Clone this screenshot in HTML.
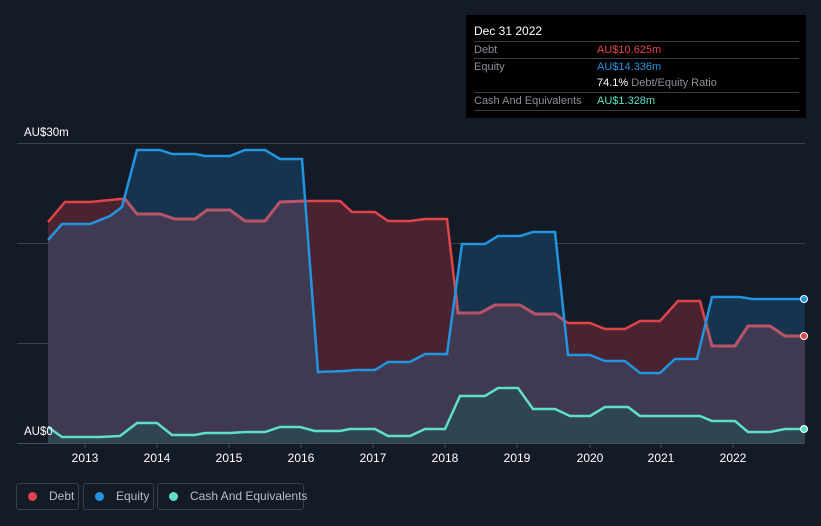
<!DOCTYPE html><html><head><style>
body{margin:0;width:821px;height:526px;background:#151b26;font-family:"Liberation Sans",sans-serif;overflow:hidden;position:relative}
.t{position:absolute;color:#fff;font-size:12px}
.tip{position:absolute;left:466px;top:15px;width:340px;height:103px;background:#000}
.row{position:absolute;left:8px;width:325px;font-size:11px;color:#8a8f98;border-top:1px solid #3a3e45;height:16px;line-height:17px;white-space:nowrap}
.leg{position:absolute;top:483px;height:27px;border:1px solid #3a3f4a;border-radius:3px;color:#b9bdc6;font-size:12px;line-height:25px;box-sizing:border-box;white-space:nowrap}
.dot{display:inline-block;width:9px;height:9px;border-radius:50%;margin:0 12px 0 11px;vertical-align:-1px}
</style></head><body>
<svg width="821" height="526" style="position:absolute;left:0;top:0">
<defs>
<clipPath id="eq"><path d="M48,240 L62,224 L90,224 L110,216 L122,207 L137,150 L160,150 L172,154 L195,154 L205,156 L230,156 L245,150 L265,150 L280,159 L302,159 L318,372 L345,371 L355,370 L375,370 L388,362 L410,362 L425,354 L447,354 L462,244 L485,244 L498,236 L520,236 L533,232 L555,232 L568,355 L590,355 L605,361 L625,361 L640,373 L660,373 L675,359 L697,359 L712,297 L740,297 L752,299 L805,299 L805,443 L48,443Z"/></clipPath>
</defs>
<g stroke="#3a3f4c" stroke-width="1"><line x1="17" y1="143.5" x2="805" y2="143.5"/><line x1="17" y1="243.5" x2="805" y2="243.5"/><line x1="17" y1="343.5" x2="805" y2="343.5"/></g>
<path d="M48,222 L65,202 L90,202 L120,199 L125,199 L137,214 L160,214 L175,219 L195,219 L207,210 L230,210 L245,221 L265,221 L280,202 L305,201 L340,201 L352,212 L375,212 L388,221 L410,221 L425,219 L447,219 L458,313 L480,313 L495,305 L520,305 L535,314 L555,314 L568,323 L590,323 L605,329 L625,329 L640,321 L660,321 L678,301 L700,301 L712,346 L735,346 L748,326 L770,326 L785,336 L805,336 L805,443 L48,443Z" fill="#4a2330"/>
<path d="M48,240 L62,224 L90,224 L110,216 L122,207 L137,150 L160,150 L172,154 L195,154 L205,156 L230,156 L245,150 L265,150 L280,159 L302,159 L318,372 L345,371 L355,370 L375,370 L388,362 L410,362 L425,354 L447,354 L462,244 L485,244 L498,236 L520,236 L533,232 L555,232 L568,355 L590,355 L605,361 L625,361 L640,373 L660,373 L675,359 L697,359 L712,297 L740,297 L752,299 L805,299 L805,443 L48,443Z" fill="#16344d"/>
<path clip-path="url(#eq)" d="M48,222 L65,202 L90,202 L120,199 L125,199 L137,214 L160,214 L175,219 L195,219 L207,210 L230,210 L245,221 L265,221 L280,202 L305,201 L340,201 L352,212 L375,212 L388,221 L410,221 L425,219 L447,219 L458,313 L480,313 L495,305 L520,305 L535,314 L555,314 L568,323 L590,323 L605,329 L625,329 L640,321 L660,321 L678,301 L700,301 L712,346 L735,346 L748,326 L770,326 L785,336 L805,336 L805,443 L48,443Z" fill="#3f3a52"/>
<path d="M48,222 L65,202 L90,202 L120,199 L125,199 L137,214 L160,214 L175,219 L195,219 L207,210 L230,210 L245,221 L265,221 L280,202 L305,201 L340,201 L352,212 L375,212 L388,221 L410,221 L425,219 L447,219 L458,313 L480,313 L495,305 L520,305 L535,314 L555,314 L568,323 L590,323 L605,329 L625,329 L640,321 L660,321 L678,301 L700,301 L712,346 L735,346 L748,326 L770,326 L785,336 L805,336" fill="none" stroke="#e04448" stroke-width="2.5"/>
<path clip-path="url(#eq)" d="M48,222 L65,202 L90,202 L120,199 L125,199 L137,214 L160,214 L175,219 L195,219 L207,210 L230,210 L245,221 L265,221 L280,202 L305,201 L340,201 L352,212 L375,212 L388,221 L410,221 L425,219 L447,219 L458,313 L480,313 L495,305 L520,305 L535,314 L555,314 L568,323 L590,323 L605,329 L625,329 L640,321 L660,321 L678,301 L700,301 L712,346 L735,346 L748,326 L770,326 L785,336 L805,336" fill="none" stroke="#b85468" stroke-width="3"/>
<path d="M48,427 L62,437 L100,437 L120,436 L137,423 L157,423 L172,435 L195,435 L205,433 L230,433 L245,432 L265,432 L280,427 L300,427 L315,431 L340,431 L350,429 L375,429 L388,436 L410,436 L425,429 L445,429 L460,396 L485,396 L498,388 L518,388 L533,409 L555,409 L570,416 L590,416 L605,407 L628,407 L640,416 L700,416 L712,421 L735,421 L748,432 L770,432 L785,429 L805,429 L805,443 L48,443Z" fill="#2c4a50" opacity="0.8"/>
<path d="M48,427 L62,437 L100,437 L120,436 L137,423 L157,423 L172,435 L195,435 L205,433 L230,433 L245,432 L265,432 L280,427 L300,427 L315,431 L340,431 L350,429 L375,429 L388,436 L410,436 L425,429 L445,429 L460,396 L485,396 L498,388 L518,388 L533,409 L555,409 L570,416 L590,416 L605,407 L628,407 L640,416 L700,416 L712,421 L735,421 L748,432 L770,432 L785,429 L805,429" fill="none" stroke="#5ee0c8" stroke-width="2.5"/>
<path d="M48,240 L62,224 L90,224 L110,216 L122,207 L137,150 L160,150 L172,154 L195,154 L205,156 L230,156 L245,150 L265,150 L280,159 L302,159 L318,372 L345,371 L355,370 L375,370 L388,362 L410,362 L425,354 L447,354 L462,244 L485,244 L498,236 L520,236 L533,232 L555,232 L568,355 L590,355 L605,361 L625,361 L640,373 L660,373 L675,359 L697,359 L712,297 L740,297 L752,299 L805,299" fill="none" stroke="#2394e0" stroke-width="2.5"/>
<line x1="17" y1="443.5" x2="805" y2="443.5" stroke="#4a4f5a"/>
<g stroke="#4a4f5a"><line x1="85" y1="443" x2="85" y2="448"/><line x1="157" y1="443" x2="157" y2="448"/><line x1="229" y1="443" x2="229" y2="448"/><line x1="301" y1="443" x2="301" y2="448"/><line x1="373" y1="443" x2="373" y2="448"/><line x1="445" y1="443" x2="445" y2="448"/><line x1="517" y1="443" x2="517" y2="448"/><line x1="590" y1="443" x2="590" y2="448"/><line x1="661" y1="443" x2="661" y2="448"/><line x1="733" y1="443" x2="733" y2="448"/></g>
<circle cx="804" cy="299" r="3.5" fill="#2394e0" stroke="#fff" stroke-width="1"/>
<circle cx="804" cy="336" r="3.5" fill="#e04448" stroke="#fff" stroke-width="1"/>
<circle cx="804" cy="429" r="3.5" fill="#5ee0c8" stroke="#fff" stroke-width="1"/>
<g fill="#fff" font-size="12" font-family="Liberation Sans" text-anchor="middle">
<text x="85" y="462">2013</text><text x="157" y="462">2014</text><text x="229" y="462">2015</text><text x="301" y="462">2016</text><text x="373" y="462">2017</text><text x="445" y="462">2018</text><text x="517" y="462">2019</text><text x="590" y="462">2020</text><text x="661" y="462">2021</text><text x="733" y="462">2022</text>
</g>
<text x="24" y="136" fill="#fff" font-size="11.5" font-family="Liberation Sans">AU$30m</text>
<text x="24" y="435" fill="#fff" font-size="11.5" font-family="Liberation Sans">AU$0</text>
</svg>
<div class="tip">
<div class="t" style="left:8px;top:9px">Dec 31 2022</div>
<div class="row" style="top:26px">Debt<span style="position:absolute;left:123px;color:#e8444a">AU$10.625m</span></div>
<div class="row" style="top:43px">Equity<span style="position:absolute;left:123px;color:#2394e0">AU$14.336m</span></div>
<div class="row" style="top:60px;border-top:none"><span style="position:absolute;left:123px"><b style="color:#fff;font-weight:normal">74.1%</b> Debt/Equity Ratio</span></div>
<div class="row" style="top:77px">Cash And Equivalents<span style="position:absolute;left:123px;color:#5ee0c8">AU$1.328m</span></div>
<div style="position:absolute;left:8px;top:95px;width:325px;border-top:1px solid #3a3e45"></div>
</div>
<div class="leg" style="left:16px;width:63px"><span class="dot" style="background:#e04448"></span>Debt</div>
<div class="leg" style="left:83px;width:71px"><span class="dot" style="background:#2394e0"></span>Equity</div>
<div class="leg" style="left:157px;width:147px"><span class="dot" style="background:#5ee0c8"></span>Cash And Equivalents</div>
</body></html>
